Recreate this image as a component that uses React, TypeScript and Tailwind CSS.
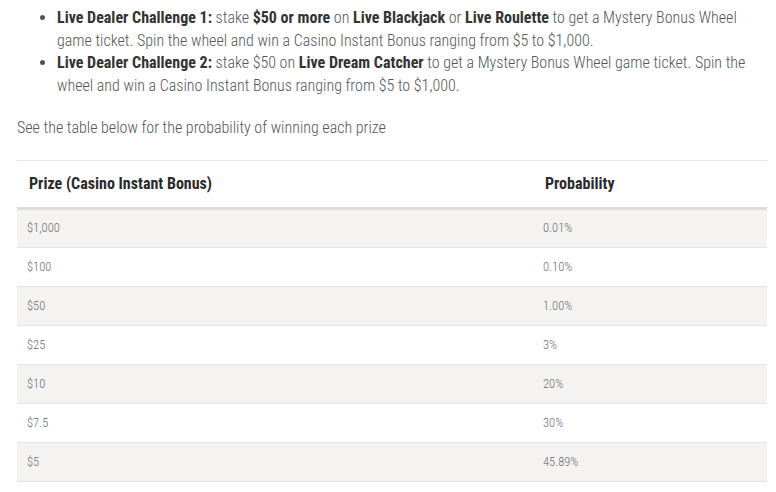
const rows = [
  { prize: "$1,000", prob: "0.01%" },
  { prize: "$100", prob: "0.10%" },
  { prize: "$50", prob: "1.00%" },
  { prize: "$25", prob: "3%" },
  { prize: "$10", prob: "20%" },
  { prize: "$7.5", prob: "30%" },
  { prize: "$5", prob: "45.89%" },
];

export default function App() {
  return (
    <main
      className="min-h-screen bg-white px-[17px] pt-[7px] text-[#555]"
      style={{ fontFamily: '"Roboto Condensed", "Liberation Sans Narrow", Roboto, sans-serif' }}
    >
      <div className="w-[750px]">
        <ul className="list-disc pl-[40px] text-[16px] font-light leading-[22.5px]">
          <li>
            <strong className="font-bold text-[#333]">Live Dealer Challenge 1:</strong> stake{" "}
            <strong className="font-bold text-[#333]">$50 or more</strong> on{" "}
            <strong className="font-bold text-[#333]">Live Blackjack</strong> or{" "}
            <strong className="font-bold text-[#333]">Live Roulette</strong> to get a Mystery Bonus Wheel game
            ticket. Spin the wheel and win a Casino Instant Bonus ranging from $5 to $1,000.
          </li>
          <li>
            <strong className="font-bold text-[#333]">Live Dealer Challenge 2:</strong> stake $50 on{" "}
            <strong className="font-bold text-[#333]">Live Dream Catcher</strong> to get a Mystery Bonus Wheel
            game ticket. Spin the wheel and win a Casino Instant Bonus ranging from $5 to $1,000.
          </li>
        </ul>

        <p className="mt-[20px] text-[16px] font-light leading-[22.5px]">
          See the table below for the probability of winning each prize
        </p>

        <table className="mt-[20px] w-full border-collapse text-left">
          <thead>
            <tr className="border-t border-[#e6e6e6] border-b-[3px] border-b-[#dcdcdc]">
              <th className="h-[48px] w-[516px] px-[12px] text-[16px] font-bold text-[#2a2a2a]">
                Prize (Casino Instant Bonus)
              </th>
              <th className="h-[48px] px-[12px] text-[16px] font-bold text-[#2a2a2a]">Probability</th>
            </tr>
          </thead>
          <tbody>
            {rows.map((r, i) => (
              <tr key={r.prize} className={`border-b border-[#e3e3e3] ${i % 2 === 0 ? "bg-[#f4f3f2]" : "bg-white"}`}>
                <td className="h-[39px] px-[10px] pt-[1px] text-[12.5px] font-light text-[#6b6b6b]">{r.prize}</td>
                <td className="h-[39px] px-[10px] pt-[1px] text-[12.5px] font-light text-[#6b6b6b]">{r.prob}</td>
              </tr>
            ))}
          </tbody>
        </table>
      </div>
    </main>
  );
}
